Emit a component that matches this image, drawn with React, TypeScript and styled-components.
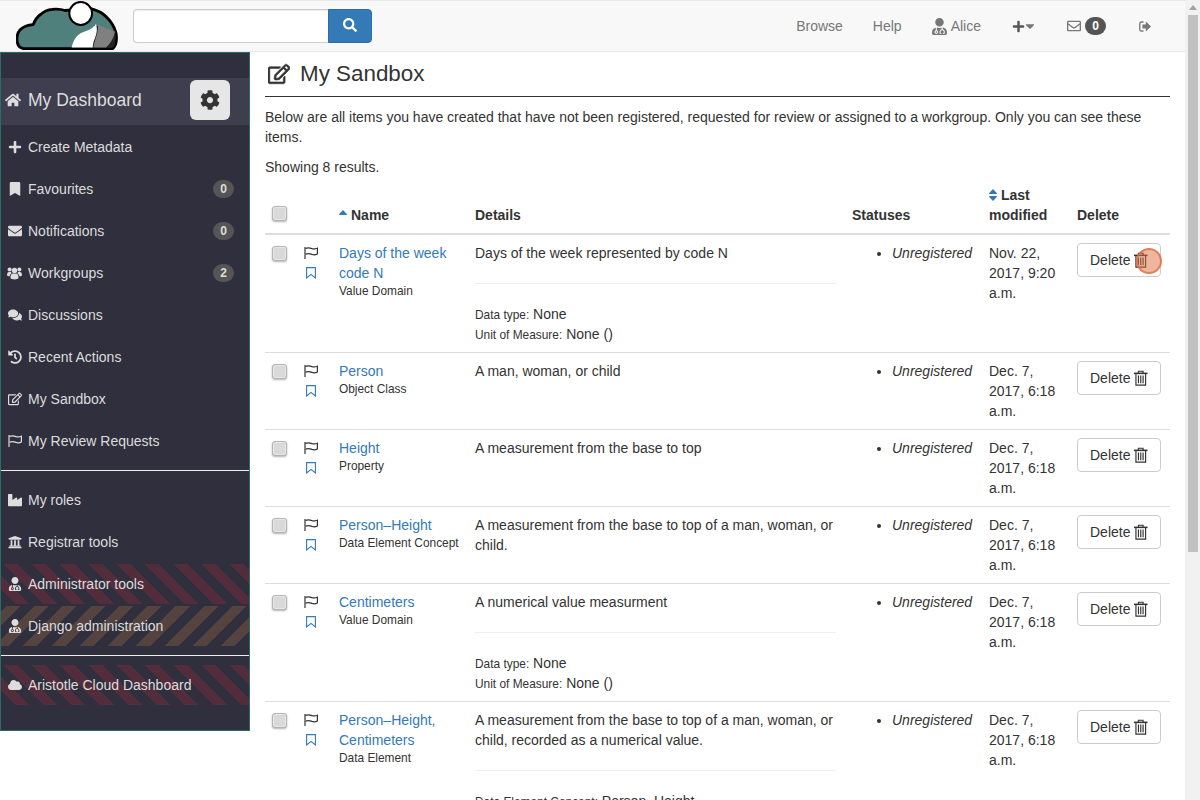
import React from "react";
import styled, { createGlobalStyle, css } from "styled-components";
import {
  FaBookmark,
  FaCaretDown,
  FaCloud,
  FaCog,
  FaComments,
  FaEnvelope,
  FaHistory,
  FaHome,
  FaIndustry,
  FaPlus,
  FaRegEdit,
  FaRegEnvelope,
  FaSearch,
  FaUniversity,
  FaUserMd,
} from "react-icons/fa";

type Row = {
  name: string;
  kind: string;
  details: string;
  date: string[];
  extra?: [string, string][];
};

const rows: Row[] = [
  {
    name: "Days of the week code N",
    kind: "Value Domain",
    details: "Days of the week represented by code N",
    date: ["Nov. 22,", "2017, 9:20", "a.m."],
    extra: [
      ["Data type:", "None"],
      ["Unit of Measure:", "None ()"],
    ],
  },
  {
    name: "Person",
    kind: "Object Class",
    details: "A man, woman, or child",
    date: ["Dec. 7,", "2017, 6:18", "a.m."],
  },
  {
    name: "Height",
    kind: "Property",
    details: "A measurement from the base to top",
    date: ["Dec. 7,", "2017, 6:18", "a.m."],
  },
  {
    name: "Person–Height",
    kind: "Data Element Concept",
    details: "A measurement from the base to top of a man, woman, or child.",
    date: ["Dec. 7,", "2017, 6:18", "a.m."],
  },
  {
    name: "Centimeters",
    kind: "Value Domain",
    details: "A numerical value measurment",
    date: ["Dec. 7,", "2017, 6:18", "a.m."],
    extra: [
      ["Data type:", "None"],
      ["Unit of Measure:", "None ()"],
    ],
  },
  {
    name: "Person–Height, Centimeters",
    kind: "Data Element",
    details:
      "A measurement from the base to top of a man, woman, or child, recorded as a numerical value.",
    date: ["Dec. 7,", "2017, 6:18", "a.m."],
    extra: [["Data Element Concept:", "Person–Height"]],
  },
];

function FlagOutline() {
  return (
    <svg width="14" height="12" viewBox="0 0 14 12" fill="none" stroke="currentColor">
      <path d="M1 0 V12" strokeWidth="1.2" />
      <path d="M1.5 1.6 C4 0 6 0.8 8 1.6 C10 2.3 11.5 2.1 13.4 1.2 V7 C11.5 8 10 8.1 8 7.4 C6 6.6 4 6 1.5 7.2" strokeWidth="1.2" />
    </svg>
  );
}

function BookmarkOutline() {
  return (
    <svg width="10" height="12" viewBox="0 0 10 12" fill="none" stroke="currentColor" strokeWidth="1.1">
      <path d="M0.6 0.6 H9.4 V11 L5 7.4 L0.6 11 Z" />
    </svg>
  );
}

function Trash() {
  return (
    <svg width="14" height="16" viewBox="0 0 14 16" fill="none" stroke="currentColor">
      <path d="M4.6 3 V1 H9.4 V3" strokeWidth="1.2" />
      <path d="M0 3.2 H14" strokeWidth="1.6" />
      <path d="M2 3.5 V15.4 H12 V3.5" strokeWidth="1.2" />
      <path d="M4.6 5.5 V13.5 M7 5.5 V13.5 M9.4 5.5 V13.5" strokeWidth="1.2" />
    </svg>
  );
}

function SignOut() {
  return (
    <svg width="12" height="11" viewBox="0 0 12 11">
      <path d="M4.5 1 H2.4 C1.4 1 0.8 1.6 0.8 2.6 V8.4 C0.8 9.4 1.4 10 2.4 10 H4.5" fill="none" stroke="currentColor" strokeWidth="1.3" />
      <path d="M6.8 0.6 L12 5.5 L6.8 10.4 V7.6 H3.4 V3.4 H6.8 Z" fill="currentColor" />
    </svg>
  );
}

function CaretUp() {
  return (
    <svg width="8" height="5" viewBox="0 0 8 5">
      <path d="M4 0 L8 4.2 Q8 5 7.2 5 H0.8 Q0 5 0 4.2 Z" fill="currentColor" />
    </svg>
  );
}

function CaretBoth() {
  return (
    <svg width="8" height="12" viewBox="0 0 8 12">
      <path d="M4 0 L8 4.2 Q8 5 7.2 5 H0.8 Q0 5 0 4.2 Z" fill="currentColor" />
      <path d="M4 12 L8 7.8 Q8 7 7.2 7 H0.8 Q0 7 0 7.8 Z" fill="currentColor" />
    </svg>
  );
}

function UsersGlyph() {
  return (
    <svg width="15" height="13" viewBox="0 0 15 13" fill="currentColor">
      <circle cx="7.5" cy="3.4" r="2.7" />
      <circle cx="2.6" cy="2.6" r="2" />
      <circle cx="12.4" cy="2.6" r="2" />
      <path d="M3.6 11.6 C3.1 8.6 4.2 6.6 6 6.6 L9 6.6 C10.8 6.6 11.9 8.6 11.4 11.6 C10.8 12.7 4.2 12.7 3.6 11.6 Z" />
      <path d="M0 8.6 C0 6 0.8 5 2 5 L3.9 5 C4.2 5.6 4.4 6 4.8 6.2 C3.4 6.8 2.8 8 2.7 9.3 C1.5 9.4 0.4 9.2 0 8.6 Z" />
      <path d="M15 8.6 C15 6 14.2 5 13 5 L11.1 5 C10.8 5.6 10.6 6 10.2 6.2 C11.6 6.8 12.2 8 12.3 9.3 C13.5 9.4 14.6 9.2 15 8.6 Z" />
    </svg>
  );
}

function Logo() {
  return (
    <svg width="104" height="50" viewBox="0 1 104 50">
      <path
        d="M7.3 48.6 C2.5 47.5 0.7 43 1 38 C1.3 32 4 28.5 9 26.5 C12 25 15 24.8 17.3 24.5 C19 20 21 17 24.5 14.5 C28 11.5 32 9.5 36 9.3 C41 8.8 45 9 49 10.5 L74 8.3 C81 10 87 13 90.5 17 C95 21.5 98.5 27 100 33 C101 39 100.5 45 97 48.6 Z"
        fill="#4f807c"
        stroke="#000"
        strokeWidth="2.8"
        strokeLinejoin="round"
      />
      <path d="M78 25 L99.5 32 C100 39 99 45 96.5 47.5 L77 47.5 Z" fill="#222" />
      <path d="M55.7 47.5 C57 41 60 36 65 33 C70 31 75.5 30 80 24 C81.5 28 81 33 79 38 C77.5 41 76.8 44 76.7 47.5 Z" fill="#fff" />
      <path d="M82.3 25 L99 31.5 C98 37 95 43 90 47.5 L77.5 47.5 C78 42 80 38 81.3 33 Z" fill="#808080" />
      <circle cx="64.7" cy="13.5" r="11.4" fill="#fff" stroke="#000" strokeWidth="2" />
    </svg>
  );
}

const menuTop = [
  { icon: <FaPlus />, label: "Create Metadata" },
  { icon: <FaBookmark />, label: "Favourites", count: 0 },
  { icon: <FaEnvelope />, label: "Notifications", count: 0 },
  { icon: <UsersGlyph />, label: "Workgroups", count: 2 },
  { icon: <FaComments />, label: "Discussions" },
  { icon: <FaHistory />, label: "Recent Actions" },
  { icon: <FaRegEdit />, label: "My Sandbox" },
  { icon: <FlagOutline />, label: "My Review Requests" },
];

export default function App() {
  return (
    <>
      <Global />
      <Viewport>
        <Page>
          <Navbar>
            <Brand>
              <Logo />
            </Brand>
            <SearchForm>
              <SearchInput type="text" />
              <SearchButton type="button">
                <FaSearch />
              </SearchButton>
            </SearchForm>
            <NavRight>
              <NavItem>Browse</NavItem>
              <NavItem>Help</NavItem>
              <NavItem $pad={1}>
                <UserIcon>
                  <FaUserMd />
                </UserIcon>
                Alice
              </NavItem>
              <NavItem>
                <PlusIcon>
                  <FaPlus />
                </PlusIcon>
                <FaCaretDown />
              </NavItem>
              <NavItem $pad={3}>
                <FaRegEnvelope />
                <NavBadge>0</NavBadge>
              </NavItem>
              <NavItem>
                <SignOut />
              </NavItem>
            </NavRight>
          </Navbar>
          <Body>
            <Sidebar>
              <DashboardRow>
                <DashboardTitle>
                  <FaHome />
                  My Dashboard
                </DashboardTitle>
                <SettingsButton>
                  <FaCog />
                </SettingsButton>
              </DashboardRow>
              {menuTop.map((m) => (
                <MenuItem key={m.label}>
                  <MenuIcon>{m.icon}</MenuIcon>
                  {m.label}
                  {m.count !== undefined && <MenuBadge>{m.count}</MenuBadge>}
                </MenuItem>
              ))}
              <MenuRule />
              <MenuItem>
                <MenuIcon>
                  <FaIndustry />
                </MenuIcon>
                My roles
              </MenuItem>
              <MenuItem>
                <MenuIcon>
                  <FaUniversity />
                </MenuIcon>
                Registrar tools
              </MenuItem>
              <MenuItem $stripe="red">
                <MenuIcon>
                  <FaUserMd />
                </MenuIcon>
                Administrator tools
              </MenuItem>
              <MenuItem $stripe="brown">
                <MenuIcon>
                  <FaUserMd />
                </MenuIcon>
                Django administration
              </MenuItem>
              <MenuRule />
              <MenuItem $stripe="red">
                <MenuIcon>
                  <FaCloud />
                </MenuIcon>
                Aristotle Cloud Dashboard
              </MenuItem>
            </Sidebar>
            <Main>
              <Title>
                <FaRegEdit />
                My Sandbox
              </Title>
              <Intro>
                Below are all items you have created that have not been registered, requested for
                review or assigned to a workgroup. Only you can see these items.
              </Intro>
              <Intro>Showing 8 results.</Intro>
              <Table>
                <colgroup>
                  <col width="31" />
                  <col width="35" />
                  <col width="136" />
                  <col width="377" />
                  <col width="137" />
                  <col width="88" />
                  <col width="101" />
                </colgroup>
                <thead>
                  <tr>
                    <Head>
                      <HeadCheck type="checkbox" />
                    </Head>
                    <Head />
                    <Head>
                      <SortMark $lift={5}>
                        <CaretUp />
                      </SortMark>
                      Name
                    </Head>
                    <Head>Details</Head>
                    <Head>Statuses</Head>
                    <Head>
                      <SortMark $lift={-1}>
                        <CaretBoth />
                      </SortMark>
                      Last modified
                    </Head>
                    <Head>Delete</Head>
                  </tr>
                </thead>
                <tbody>
                  {rows.map((r) => (
                    <tr key={r.name}>
                      <Cell>
                        <Check type="checkbox" />
                      </Cell>
                      <Cell>
                        <FlagIcon>
                          <FlagOutline />
                        </FlagIcon>
                        <MarkIcon>
                          <BookmarkOutline />
                        </MarkIcon>
                      </Cell>
                      <Cell>
                        <ItemLink>{r.name}</ItemLink>
                        <Kind>{r.kind}</Kind>
                      </Cell>
                      <Cell>
                        {r.details}
                        {r.extra && (
                          <>
                            <DetailRule />
                            {r.extra.map(([k, v]) => (
                              <div key={k}>
                                <small>{k}</small> {v}
                              </div>
                            ))}
                          </>
                        )}
                      </Cell>
                      <Cell>
                        <Statuses>
                          <li>Unregistered</li>
                        </Statuses>
                      </Cell>
                      <Cell>
                        {r.date.map((d) => (
                          <div key={d}>{d}</div>
                        ))}
                      </Cell>
                      <Cell>
                        <DeleteButton>
                          Delete
                          <Trash />
                          {r.name.startsWith("Days") && <ClickMark />}
                        </DeleteButton>
                      </Cell>
                    </tr>
                  ))}
                </tbody>
              </Table>
            </Main>
          </Body>
        </Page>
        <Scrollbar>
          <ScrollArrow />
          <ScrollThumb />
        </Scrollbar>
      </Viewport>
    </>
  );
}

const Global = createGlobalStyle`
  html, body {
    margin: 0;
    height: 100%;
    overflow: hidden;
  }
  body {
    font-family: "Liberation Sans", Arial, sans-serif;
    font-size: 14px;
    line-height: 20px;
    color: #333;
    background: #fff;
  }
  * {
    box-sizing: border-box;
  }
`;

const Viewport = styled.div`
  display: flex;
  width: 1200px;
  height: 800px;
  overflow: hidden;
`;

const Page = styled.div`
  width: 1185px;
  flex: none;
`;

const Scrollbar = styled.div`
  width: 15px;
  flex: none;
  background: #f1f1f1;
  padding: 5px 2px 0 3px;
`;

const ScrollArrow = styled.div`
  width: 0;
  height: 0;
  margin: 0 auto 5px;
  border-left: 4px solid transparent;
  border-right: 4px solid transparent;
  border-bottom: 5px solid #a3a3a3;
`;

const ScrollThumb = styled.div`
  height: 537px;
  background: #c1c1c1;
`;

const Navbar = styled.nav`
  display: flex;
  align-items: center;
  height: 52px;
  background: #f8f8f8;
  border: 1px solid #e7e7e7;
  border-left: 0;
  border-right: 0;
`;

const Brand = styled.div`
  width: 133px;
  flex: none;
  padding: 0 0 0 16px;
  height: 50px;
`;

const SearchForm = styled.form`
  display: flex;
  width: 239px;
  flex: none;
`;

const SearchInput = styled.input`
  flex: 1;
  min-width: 0;
  height: 34px;
  border: 1px solid #ccc;
  border-right: 0;
  border-radius: 4px 0 0 4px;
  box-shadow: inset 0 1px 1px rgba(0, 0, 0, 0.075);
`;

const SearchButton = styled.button`
  width: 44px;
  height: 34px;
  padding: 0;
  color: #fff;
  background: #337ab7;
  border: 1px solid #2e6da4;
  border-radius: 0 4px 4px 0;
  font-size: 14px;
`;

const NavRight = styled.div`
  display: flex;
  align-items: center;
  margin-left: auto;
  padding-right: 34px;
  gap: 30px;
  color: #777;
`;

const NavItem = styled.span<{ $pad?: number }>`
  display: inline-flex;
  align-items: center;
  gap: 4px;
  padding-right: ${(p) => p.$pad ?? 0}px;
  color: #777;
`;

const UserIcon = styled.span`
  display: flex;
  margin: 0 -1px 0 -1px;
  font-size: 17px;
`;

const PlusIcon = styled.span`
  display: flex;
  margin-right: -6px;
  color: #555;
  font-size: 13px;
`;

const NavBadge = styled.span`
  min-width: 21px;
  height: 18px;
  border-radius: 10px;
  background: #555;
  color: #fff;
  font-size: 12px;
  font-weight: 700;
  line-height: 18px;
  text-align: center;
`;

const Body = styled.div`
  display: flex;
  align-items: flex-start;
`;

const Sidebar = styled.aside`
  width: 250px;
  height: 679px;
  flex: none;
  padding: 25px 0 0;
  background: #2f2f3e;
  border: 1px solid #2b6b68;
  color: #ddd;
`;

const DashboardRow = styled.div`
  display: flex;
  align-items: flex-start;
  justify-content: space-between;
  height: 47px;
  padding: 2px 19px 0 4px;
  margin-bottom: 2px;
  background: #3e3e4e;
`;

const DashboardTitle = styled.div`
  display: flex;
  align-items: center;
  gap: 7px;
  height: 40px;
  font-size: 17.5px;
  svg {
    font-size: 16px;
  }
`;

const SettingsButton = styled.div`
  display: flex;
  align-items: center;
  justify-content: center;
  width: 40px;
  height: 40px;
  border-radius: 6px;
  background: #e6e6e6;
  color: #333;
  font-size: 20px;
`;

const stripes = {
  red: css`
    background: repeating-linear-gradient(45deg, transparent 0 10px, #532d3b 10px 20px);
  `,
  brown: css`
    background: repeating-linear-gradient(-45deg, transparent 0 10px, #54433f 10px 20px);
  `,
};

const MenuItem = styled.div<{ $stripe?: "red" | "brown" }>`
  display: flex;
  align-items: center;
  height: 40px;
  margin-bottom: 2px;
  padding-right: 15px;
  ${(p) => p.$stripe && stripes[p.$stripe]}
`;

const MenuIcon = styled.span`
  display: flex;
  justify-content: center;
  width: 27px;
  flex: none;
  font-size: 14px;
`;

const MenuBadge = styled.span`
  margin-left: auto;
  min-width: 21px;
  height: 18px;
  border-radius: 10px;
  background: #555;
  color: #ddd;
  font-size: 12px;
  font-weight: 700;
  line-height: 18px;
  text-align: center;
`;

const MenuRule = styled.hr`
  height: 1px;
  margin: 9px 0;
  border: 0;
  background: #eee;
`;

const Main = styled.main`
  flex: 1;
  min-width: 0;
  padding: 0 15px;
`;

const Title = styled.h1`
  display: flex;
  align-items: center;
  gap: 10px;
  height: 45px;
  margin: 0 0 10px;
  padding: 0 0 0 3px;
  font-size: 22.4px;
  font-weight: 400;
  border-bottom: 1px solid #333;
  svg {
    font-size: 22px;
    stroke: currentColor;
    stroke-width: 14;
  }
`;

const Intro = styled.p`
  margin: 0 0 10px;
  &:last-of-type {
    margin: 0;
  }
`;

const Table = styled.table`
  width: 905px;
  table-layout: fixed;
  border-collapse: collapse;
`;

const Head = styled.th`
  padding: 8px;
  text-align: left;
  vertical-align: bottom;
  border-bottom: 2px solid #ddd;
`;

const Cell = styled.td`
  padding: 8px;
  vertical-align: top;
  border-bottom: 1px solid #ddd;
  small {
    font-size: 11.9px;
    line-height: 1;
  }
`;

const Check = styled.input`
  appearance: none;
  display: block;
  width: 15px;
  height: 15px;
  margin: 3px 0 0 -1.5px;
  background: #d9d9d9;
  border: 1px solid #b4b4b4;
  border-radius: 3px;
  box-shadow: 0 1px 2px rgba(0, 0, 0, 0.3), inset 0 0 0 1px #e8e8e8;
`;

const HeadCheck = styled(Check)`
  margin: 0 0 4px -1.5px;
`;

const FlagIcon = styled.div`
  display: flex;
  align-items: center;
  height: 20px;
  color: #333;
`;

const MarkIcon = styled.div`
  display: flex;
  align-items: center;
  height: 20px;
  padding: 0 0 0 2px;
  color: #337ab7;
`;

const ItemLink = styled.a`
  display: block;
  color: #337ab7;
`;

const Kind = styled.div`
  font-size: 11.9px;
  line-height: 16px;
  white-space: nowrap;
`;

const DetailRule = styled.hr`
  height: 1px;
  margin: 20px 0;
  border: 0;
  background: #eee;
`;

const Statuses = styled.ul`
  margin: 0;
  padding: 0 0 0 40px;
  font-style: italic;
`;

const SortMark = styled.span<{ $lift: number }>`
  display: inline-flex;
  align-items: center;
  margin-right: 4px;
  vertical-align: ${(p) => p.$lift}px;
  color: #337ab7;
`;

const DeleteButton = styled.button`
  position: relative;
  display: inline-flex;
  align-items: center;
  gap: 4px;
  width: 84px;
  height: 34px;
  padding: 0 12px;
  font: inherit;
  color: #333;
  background: #fff;
  border: 1px solid #ccc;
  border-radius: 4px;
`;

const ClickMark = styled.span`
  position: absolute;
  left: 58px;
  top: 4px;
  width: 26px;
  height: 26px;
  border-radius: 50%;
  background: rgba(222, 110, 60, 0.5);
  border: 2px solid rgba(222, 110, 70, 0.75);
`;
